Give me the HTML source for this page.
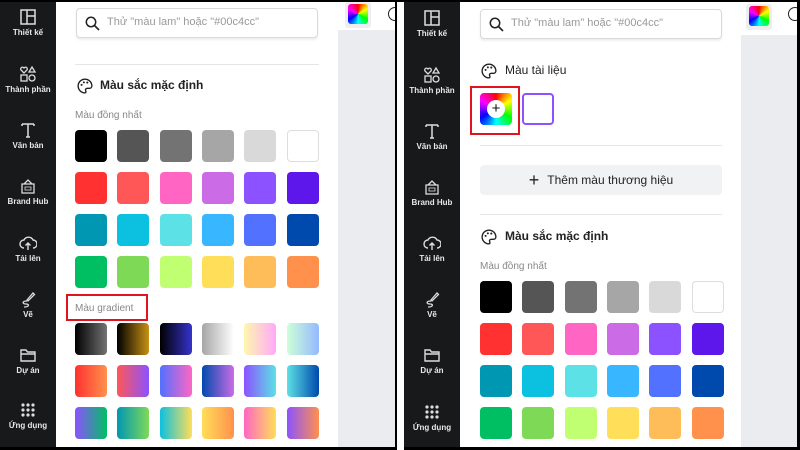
<!DOCTYPE html>
<html><head><meta charset="utf-8"><style>
*{margin:0;padding:0;box-sizing:border-box}
body{width:800px;height:450px;overflow:hidden;background:#fff;position:relative;font-family:"Liberation Sans","DejaVu Sans",sans-serif}
.a{position:absolute}
.side{background:#18191b}
.lbl{position:absolute;width:56px;text-align:center;color:#e8e8e8;font-size:8px;font-weight:bold}
.ic{position:absolute;left:19px;width:18px;height:18px}
.sw{position:absolute;width:32px;height:32px;border-radius:4px}
.t{position:absolute;font-size:12px;color:#222}
.s{position:absolute;font-size:10px;color:#888}
.srch{position:absolute;height:30px;width:242px;border:1px solid #d8d9dc;border-radius:4px;background:#fff;box-shadow:0 2px 2px #eee}
.srch span{position:absolute;left:30px;top:7px;font-size:11px;color:#999}
</style></head><body>
<div class="a side" style="left:0;top:0;width:56px;height:450px"></div>
<div class="a" style="left:338px;top:30px;width:57px;height:420px;background:#ebecf0"></div>
<div class="a" style="left:741px;top:35px;width:56px;height:412px;background:#ebecf0"></div>

<div id="L"></div>
<script>
function side(x,ys){
 const names=["Thiết kế","Thành phần","Văn bản","Brand Hub","Tải lên","Vẽ","Dự án","Ứng dụng"];
 const icons=[
 '<rect x="2" y="2" width="14" height="14" fill="none" stroke="#ddd" stroke-width="1.5"/><path d="M8 2V16M8 8H16" stroke="#ddd" stroke-width="1.5"/>',
 '<path d="M5 8L2 5A1.6 1.6 0 015 3 1.6 1.6 0 018 5Z" fill="none" stroke="#ddd" stroke-width="1.3"/><path d="M13 2L16 7H10Z" fill="none" stroke="#ddd" stroke-width="1.3"/><rect x="2" y="10" width="6" height="6" fill="none" stroke="#ddd" stroke-width="1.3"/><circle cx="13" cy="13" r="3" fill="none" stroke="#ddd" stroke-width="1.3"/>',
 '<path d="M3 3H15M9 3V16M3 3V5M15 3V5M7 16H11" stroke="#ddd" stroke-width="1.5" fill="none"/>',
 '<path d="M3 7H15V16H3Z M5 7L9 3 13 7" fill="none" stroke="#ddd" stroke-width="1.3"/><rect x="6" y="10" width="6" height="3" fill="none" stroke="#ddd" stroke-width="0.8"/>',
 '<path d="M5 14A4 4 0 015 6 5 5 0 0114 6 4 4 0 0114 14M9 16V9M6.5 11.5L9 9 11.5 11.5" fill="none" stroke="#ddd" stroke-width="1.4"/>',
 '<path d="M8 10L14 3 15.5 4.5 9 11ZM8 11C3 11 3 14 7 14S10 17 5 17" fill="none" stroke="#ddd" stroke-width="1.3"/>',
 '<path d="M2 4H7L8.5 6H16V15H2Z M2 8H16" fill="none" stroke="#ddd" stroke-width="1.4"/>',
 '<g fill="#ddd"><circle cx="4" cy="4" r="1.6"/><circle cx="9" cy="4" r="1.6"/><circle cx="14" cy="4" r="1.6"/><circle cx="4" cy="9" r="1.6"/><circle cx="9" cy="9" r="1.6"/><circle cx="14" cy="9" r="1.6"/><circle cx="4" cy="14" r="1.6"/><circle cx="9" cy="14" r="1.6"/><circle cx="14" cy="14" r="1.6"/></g>'];
 let h='<div class="a side" style="left:'+x+'px;top:0;width:56px;height:450px">';
 for(let i=0;i<8;i++){h+='<svg class="ic" style="top:'+(ys[i]-24)+'px" viewBox="0 0 18 18">'+icons[i]+'</svg><div class="lbl" style="top:'+(ys[i]-4)+'px">'+names[i]+'</div>';}
 return h+'</div>';
}
const solid=[["#000","#555","#737373","#a6a6a6","#d9d9d9","#fff"],["#ff3131","#ff5757","#ff66c4","#cb6ce6","#8c52ff","#5e17eb"],["#0097b2","#0cc0df","#5ce1e6","#38b6ff","#5271ff","#004aad"],["#00bf63","#7ed957","#c1ff72","#ffde59","#ffbd59","#ff914d"]];
const grad=[["linear-gradient(90deg,#000,#737373)","linear-gradient(90deg,#000,#c89116)","linear-gradient(90deg,#000,#3533cd)","linear-gradient(90deg,#a6a6a6,#fff)","linear-gradient(90deg,#fff7ad,#ffa9f9)","linear-gradient(90deg,#cdffd8,#94b9ff)"],
["linear-gradient(90deg,#ff3131,#ff914d)","linear-gradient(90deg,#ff5757,#8c52ff)","linear-gradient(90deg,#5170ff,#ff66c4)","linear-gradient(90deg,#004aad,#cb6ce6)","linear-gradient(90deg,#8c52ff,#5ce1e6)","linear-gradient(90deg,#5de0e6,#004aad)"],
["linear-gradient(90deg,#8c52ff,#00bf63)","linear-gradient(90deg,#0097b2,#7ed957)","linear-gradient(90deg,#0cc0df,#ffde59)","linear-gradient(90deg,#ffde59,#ff914d)","linear-gradient(90deg,#ff66c4,#ffde59)","linear-gradient(90deg,#8c52ff,#ff914d)"]];
function grid(x0,ys,rows){let h='';rows.forEach((r,i)=>r.forEach((c,j)=>{h+='<div class="sw" style="left:'+(x0+j*42.3)+'px;top:'+ys[i]+'px;background:'+c+';'+(c=="#fff"?'border:1px solid #ddd':'')+'"></div>'}));return h;}
const srchIcon='<svg style="position:absolute;left:8px;top:7px" width="15" height="15" viewBox="0 0 15 15"><circle cx="6" cy="6" r="4.7" fill="none" stroke="#222" stroke-width="1.5"/><path d="M9.5 9.5L14 14" stroke="#222" stroke-width="1.6"/></svg>';
const palette='<svg width="16" height="16" viewBox="0 0 14 14"><path d="M7 1A6 6 0 001 7 6 6 0 007 13C8 13 8 12 7.5 11 7 10 8 9 9 9H11A2 2 0 0013 7 6 6 0 007 1Z" fill="none" stroke="#222" stroke-width="1.2"/><circle cx="4" cy="6" r="0.9" fill="#222"/><circle cx="6" cy="3.8" r="0.9" fill="#222"/><circle cx="9" cy="4" r="0.9" fill="#222"/></svg>';
const rainbow='conic-gradient(from 0deg,#f00,#ff0,#0f0,#0ff,#00f,#f0f,#f00)';
let h='';
h+=side(0,[32,89,145,201,258,314,370,425]);
h+='<div class="srch" style="left:76px;top:8px">'+srchIcon+'<span>Thử "màu lam" hoặc "#00c4cc"</span></div>';
h+='<div class="a" style="left:75px;top:64px;width:244px;height:1px;background:#e6e6e6"></div>';
h+='<div class="a" style="left:77px;top:78px">'+palette+'</div><div class="t" style="left:100px;top:78px;font-weight:bold">Màu sắc mặc định</div>';
h+='<div class="s" style="left:75px;top:110px">Màu đồng nhất</div>';
h+=grid(75,[130,172,214,256],solid);
h+='<div class="s" style="left:75px;top:303px">Màu gradient</div>';
h+='<div class="a" style="left:66px;top:294px;width:82px;height:27px;border:2px solid #e0141e"></div>';
h+=grid(75,[323,365,407],grad);
h+='<div class="a" style="left:345px;top:2px;width:26px;height:26px;background:#eee;border-radius:3px"></div><div class="a" style="left:348px;top:4px;width:20px;height:20px;border-radius:3px;background:'+rainbow+'"></div>';
h+='<div class="a" style="left:388px;top:7px;width:14px;height:14px;border:1.5px solid #222;border-radius:50%"></div>';
h+=side(404,[33,90,146,202,258,314,370,427]);
h+='<div class="srch" style="left:480px;top:9px">'+srchIcon+'<span>Thử "màu lam" hoặc "#00c4cc"</span></div>';
h+='<div class="a" style="left:746px;top:4px;width:26px;height:26px;background:#eee;border-radius:3px"></div><div class="a" style="left:749px;top:6px;width:20px;height:20px;border-radius:3px;background:'+rainbow+'"></div>';
h+='<div class="a" style="left:788px;top:7px;width:14px;height:14px;border:1.5px solid #222;border-radius:50%"></div>';
h+='<div class="a" style="left:481px;top:63px">'+palette+'</div><div class="t" style="left:505px;top:63px">Màu tài liệu</div>';
h+='<div class="a" style="left:480px;top:93px;width:32px;height:32px;border-radius:4px;background:'+rainbow+'"></div><div class="a" style="left:487px;top:100px;width:18px;height:18px;border-radius:50%;background:#fff;text-align:center;font-size:15px;line-height:17px;color:#111">+</div>';
h+='<div class="a" style="left:470px;top:86px;width:50px;height:49px;border:2px solid #e0141e"></div>';
h+='<div class="a" style="left:522px;top:93px;width:32px;height:32px;border-radius:4px;border:2px solid #8c52ff"></div>';
h+='<div class="a" style="left:480px;top:145px;width:242px;height:1px;background:#e6e6e6"></div>';
h+='<div class="a" style="left:480px;top:165px;width:242px;height:30px;background:#f1f2f4;border-radius:4px;text-align:center;font-size:12px;line-height:30px;color:#222"><span style="font-size:18px;vertical-align:-2px;margin-right:8px">+</span>Thêm màu thương hiệu</div>';
h+='<div class="a" style="left:480px;top:214px;width:242px;height:1px;background:#e6e6e6"></div>';
h+='<div class="a" style="left:481px;top:229px">'+palette+'</div><div class="t" style="left:505px;top:229px;font-weight:bold">Màu sắc mặc định</div>';
h+='<div class="s" style="left:480px;top:261px">Màu đồng nhất</div>';
h+=grid(480,[281,323,365,407],solid);
document.getElementById('L').outerHTML=h;
</script>
<div class="a" style="left:0;top:447px;width:800px;height:3px;background:#000"></div>
<div class="a" style="left:395px;top:0;width:2px;height:450px;background:#000"></div>
<div class="a" style="left:397px;top:0;width:7px;height:450px;background:#fff"></div>
<div class="a" style="left:797px;top:0;width:3px;height:450px;background:#000"></div>
<div class="a" style="left:0;top:0;width:800px;height:2px;background:#000"></div>
</body></html>
